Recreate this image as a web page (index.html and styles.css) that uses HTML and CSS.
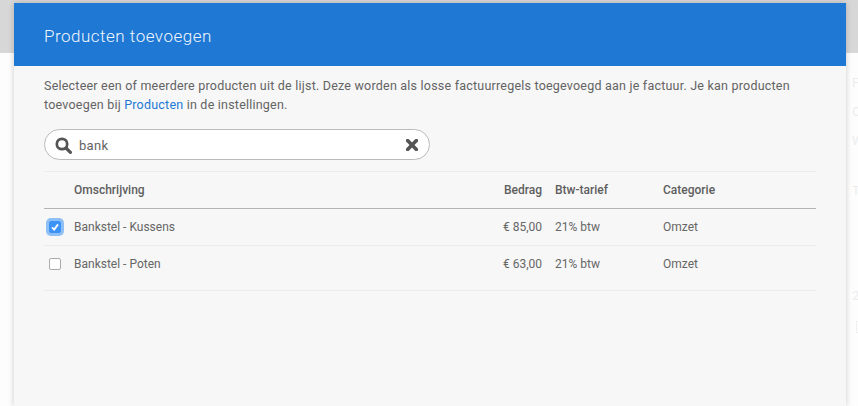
FILE: index.html
```html
<!DOCTYPE html>
<html lang="nl">
<head>
<meta charset="utf-8">
<title>Producten toevoegen</title>
<link rel="stylesheet" href="styles.css">
</head>
<body>
<div class="backdrop">
  <div class="topbar"></div>
  <span class="ghost g1">F</span>
  <span class="ghost g2">O</span>
  <span class="ghost g3">W</span>
  <span class="ghost g4">T</span>
  <span class="ghost g5">2</span>
  <span class="ghost-box"></span>
</div>
<main class="modal">
  <header class="modal-head">Producten toevoegen</header>
  <section class="modal-body">
    <p class="intro">Selecteer een of meerdere producten uit de lijst. Deze worden als losse factuurregels toegevoegd aan je factuur. Je kan producten toevoegen bij <a href="#">Producten</a> in de instellingen.</p>
    <div class="search">
      <svg class="icon-search" viewBox="0 0 17 17" width="17" height="17"><circle cx="7" cy="7" r="5.2" fill="none" stroke="#555" stroke-width="2.7"/><path d="M11 11 L15.4 15.4" stroke="#555" stroke-width="3.2" stroke-linecap="round"/></svg>
      <span class="search-text">bank</span>
      <svg class="icon-clear" viewBox="0 0 12 12" width="12" height="12"><path d="M1.6 1.6 L10.4 10.4 M10.4 1.6 L1.6 10.4" stroke="#555" stroke-width="3.6" stroke-linecap="round"/></svg>
    </div>
    <div class="row head">
      <span></span><span>Omschrijving</span><span class="num">Bedrag</span><span>Btw-tarief</span><span>Categorie</span>
    </div>
    <div class="row item">
      <span class="check on"><svg viewBox="0 0 10 10" width="10" height="10"><path d="M2 5.4 L4.2 7.6 L8 2.4" fill="none" stroke="#fff" stroke-width="1.8"/></svg></span>
      <span>Bankstel - Kussens</span><span class="num">€ 85,00</span><span>21% btw</span><span>Omzet</span>
    </div>
    <div class="row item last">
      <span class="check"></span>
      <span>Bankstel - Poten</span><span class="num">€ 63,00</span><span>21% btw</span><span>Omzet</span>
    </div>
  </section>
</main>
</body>
</html>
```
FILE: styles.css
```css
* { box-sizing: border-box; }
html, body { margin: 0; height: 100%; overflow: hidden; }
body {
  position: relative;
  width: 858px;
  height: 406px;
  background: #fdfdfd;
  font-family: Roboto, "Liberation Sans", sans-serif;
  font-size: 12px;
  color: #666;
}
.backdrop { position: absolute; inset: 0; }
.topbar { height: 53px; background: #d7d7d7; }
.ghost { position: absolute; left: 852px; font-size: 13px; line-height: 14px; color: #ececec; }
.g1 { top: 76px; }
.g2 { top: 105px; }
.g3 { top: 134px; }
.g4 { top: 184px; }
.g5 { top: 289px; }
.ghost-box { position: absolute; left: 856px; top: 321px; width: 4px; height: 12px; border: 1px solid #f0f0f0; }
.modal {
  position: absolute;
  left: 14px;
  top: 3px;
  width: 832px;
  height: 403px;
  background: #f7f7f7;
  box-shadow: 0 0 6px rgba(0, 0, 0, .2);
}
.modal-head {
  height: 63px;
  padding: 0 30px;
  background: #1e78d4;
  color: #f1f6fc;
  font-size: 17px;
  font-weight: 300;
  letter-spacing: .5px;
  line-height: 67px;
}
.modal-body { padding: 10px 30px 0; }
.intro {
  margin: 0;
  font-size: 12.5px;
  line-height: 19px;
  letter-spacing: .215px;
  color: #636363;
}
.intro a { color: #1e78d4; text-decoration: none; }
.search {
  display: flex;
  align-items: center;
  width: 386px;
  height: 31px;
  margin-top: 15px;
  padding: 1px 11px 0 10px;
  background: #fff;
  border: 1px solid #bbb;
  border-radius: 16px;
}
.search-text { flex: 1; margin-left: 7px; font-size: 13px; letter-spacing: .3px; color: #636363; }
.row {
  display: grid;
  grid-template-columns: 30px 1fr 68px 121px 153px;
  align-items: center;
  width: 772px;
}
.row > :nth-child(4) { padding-left: 13px; }
.head {
  height: 38px;
  margin-top: 11px;
  border-top: 1px solid #ececec;
  border-bottom: 1px solid #b4b4b4;
  font-weight: 500;
  color: #5e5e5e;
}
.item { height: 37px; border-bottom: 1px solid #ececec; }
.last { height: 45px; padding-bottom: 8px; }
.num { text-align: right; }
.check {
  display: flex;
  align-items: center;
  justify-content: center;
  width: 12px;
  height: 12px;
  margin-left: 5px;
  background: #fff;
  border: 1px solid #aaa;
  border-radius: 2px;
}
.check.on {
  background: #3b93f7;
  border-color: #3b93f7;
  box-shadow: 0 0 0 3px #8fc0f5;
}
```
